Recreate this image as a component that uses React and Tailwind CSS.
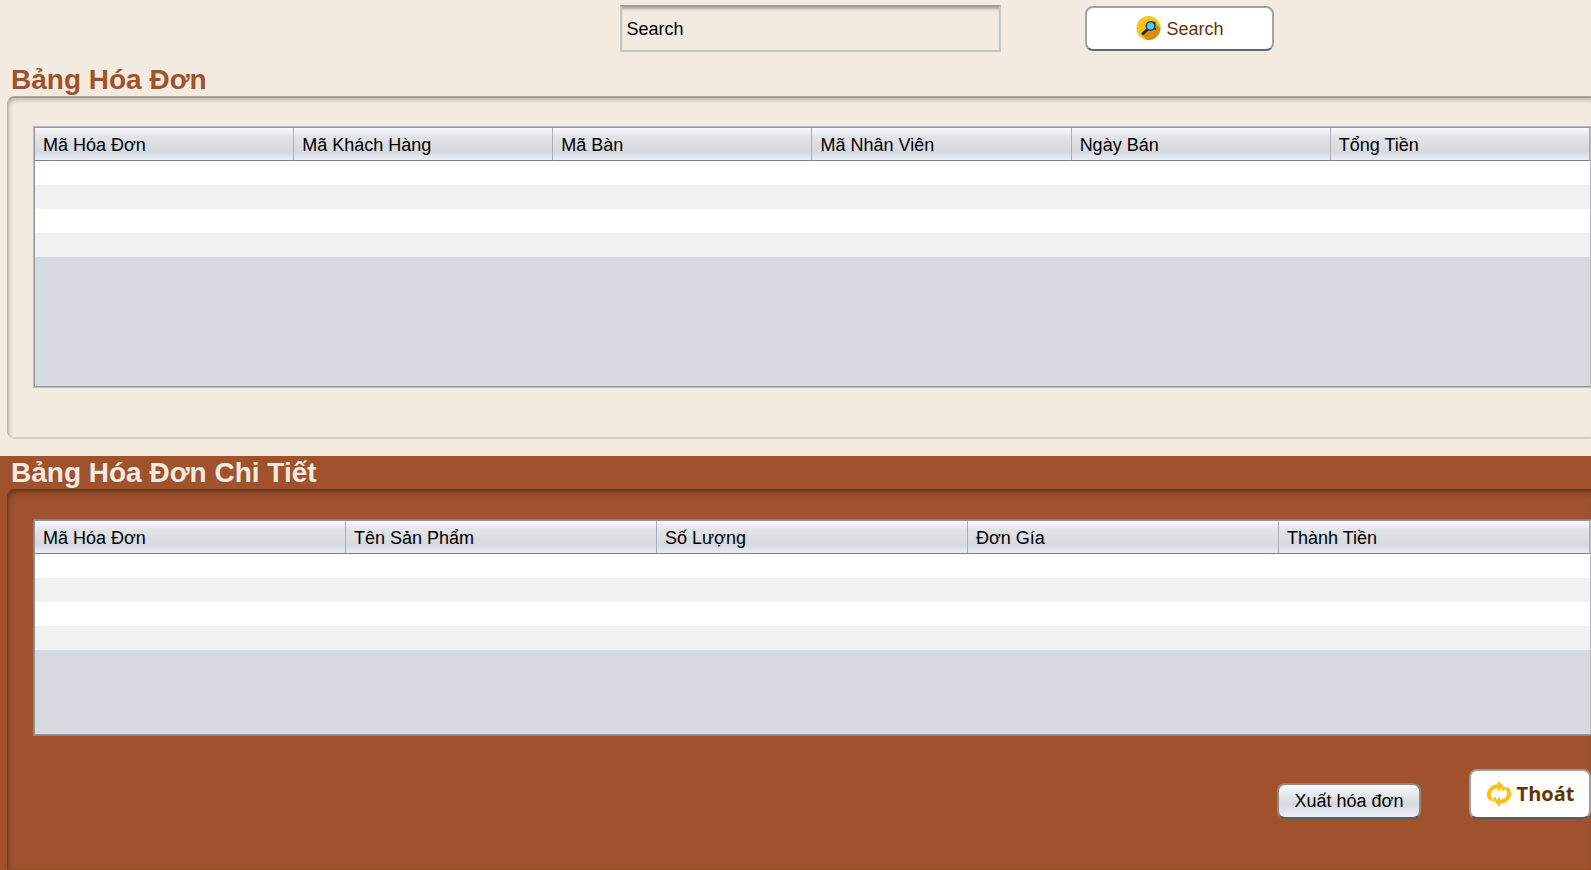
import React from "react";

const invoiceColumns = ["Mã Hóa Đơn", "Mã Khách Hàng", "Mã Bàn", "Mã Nhân Viên", "Ngày Bán", "Tổng Tiền"];
const detailColumns = ["Mã Hóa Đơn", "Tên Sản Phẩm", "Số Lượng", "Đơn Gía", "Thành Tiền"];

function SearchIcon() {
  return (
    <svg width="26" height="26" viewBox="0 0 26 26" aria-hidden="true">
      <defs>
        <clipPath id="disc">
          <circle cx="12.5" cy="12" r="12" />
        </clipPath>
      </defs>
      <g clipPath="url(#disc)">
        <rect width="26" height="26" fill="#fec21c" />
        <path d="M19 7 L26 13 V26 H12 L6 18.5 Z" fill="#d98e0b" />
      </g>
      <path d="M11.5 13.5 L7 17.5" stroke="#17203f" strokeWidth="3" strokeLinecap="round" />
      <circle cx="14.5" cy="10" r="4.3" fill="#4fcfea" stroke="#1f4a63" strokeWidth="1.6" />
      <path d="M17.5 6 L19.5 7.5 M18.5 12.5 L20 13.5" stroke="#1f3a4f" strokeWidth="1.8" />
    </svg>
  );
}

function RefreshIcon() {
  return (
    <svg width="26" height="26" viewBox="0 0 26 26" fill="none" aria-hidden="true">
      <g stroke="#ffbf0f" strokeWidth="4">
        <path d="M5.2 18.6 A10 8.2 0 0 1 12.5 5.2" />
        <path d="M20.8 7.4 A10 8.2 0 0 1 13.5 20.8" />
      </g>
      <path d="M12 0 L17.5 5.2 L12 10.5 Z M14 15.5 L8.5 20.8 L14 26 Z" fill="#ffbf0f" />
      <path d="M4.5 19.8 L9.8 15.5 L10.3 20 Z M21.5 6.2 L16.2 10.5 L15.7 6 Z" fill="#ffbf0f" />
    </svg>
  );
}

function DataTable({ label, columns, height }) {
  return (
    <div className={`border border-r-0 border-[#9b9ea5]/60 ${height}`}>
      <div className="h-full border border-[#8f94a1] border-r-[#b9bbbd] bg-[#d6d9e0]">
        <table aria-label={label} className="w-full table-fixed border-separate border-spacing-0">
          <thead>
            <tr>
              {columns.map((name) => (
                <th
                  key={name}
                  scope="col"
                  className="h-[33px] border-r border-b border-r-[#a9adb5] border-b-[#7b7f89] bg-[linear-gradient(to_bottom,#f8f9fb_0%,#e3e5e9_25%,#dcdee2_50%,#d6d9df_75%,#e9edf6_100%)] p-0 pt-[2px] pl-2 text-left text-lg leading-6 font-normal text-black"
                >
                  {name}
                </th>
              ))}
            </tr>
          </thead>
          <tbody>
            {[0, 1, 2, 3].map((row) => (
              <tr key={row} className="odd:bg-white even:bg-[#f1f1f1]">
                {columns.map((name) => (
                  <td key={name} className="h-6 p-0"></td>
                ))}
              </tr>
            ))}
          </tbody>
        </table>
      </div>
    </div>
  );
}

export default function App() {
  return (
    <div className="flex min-h-screen flex-col overflow-x-hidden bg-[#f3ebe0] font-['Liberation_Sans',Arial,sans-serif]">
      <form className="flex items-start pt-[5px] pl-[39%]" onSubmit={(e) => e.preventDefault()}>
        <input
          type="text"
          aria-label="Search"
          defaultValue="Search"
          className="h-[47px] w-[381px] border-2 border-[#c6c5c1] border-t-[#a19f98] bg-transparent px-1 pt-[2px] text-lg text-black shadow-[inset_0_3px_3px_-1px_rgba(80,75,60,0.4)] outline-none"
        />
        <button
          type="submit"
          className="mt-px ml-[84px] flex h-[45px] w-[189px] items-center justify-center gap-1 rounded-lg border-2 border-[#9da3a8] border-b-[#62676c] bg-white text-lg text-[#663300]"
        >
          <SearchIcon />
          Search
        </button>
      </form>

      <section className="pt-[11px] pl-[7px]">
        <h2 className="pl-1 text-[28px] leading-[33px] font-bold text-[#a0522d]">Bảng Hóa Đơn</h2>
        <div className="h-[343px] rounded-l-lg border-t-2 border-b-2 border-l border-t-[#a5a194] border-b-[#d5cfc2] border-l-[#b8b3a6] pt-7 pl-[25px] shadow-[inset_2px_3px_4px_-1px_rgba(80,75,50,0.35)]">
          <DataTable label="Bảng Hóa Đơn" columns={invoiceColumns} height="h-[262px]" />
        </div>
      </section>

      <section className="mt-[17px] flex grow flex-col bg-[#a0522d] pl-[7px]">
        <h2 className="pl-1 text-[28px] leading-[33px] font-bold text-[#f3ebe0]">Bảng Hóa Đơn Chi Tiết</h2>
        <div className="grow rounded-tl-lg border-t-2 border-b border-l border-t-[#6c371e] border-b-[#8f4928] border-l-[#7a3e22] pt-7 pl-[25px] shadow-[inset_2px_3px_4px_-1px_rgba(40,20,5,0.35)]">
          <DataTable label="Bảng Hóa Đơn Chi Tiết" columns={detailColumns} height="h-[217px]" />
          <div className="flex items-end justify-end gap-12 pt-[33px] pb-6">
            <button
              type="button"
              className="h-9 w-36 rounded-lg border-2 border-[#92867f] border-b-[#5c5c60] bg-linear-to-b from-[#f7f8fa] via-[#d6d9df] via-60% to-[#eceff7] text-lg leading-6 text-black"
            >
              Xuất hóa đơn
            </button>
            <button
              type="button"
              className="flex h-[50px] w-[122px] items-center justify-center gap-[5px] rounded-lg border-2 border-[#a49c97] border-b-[#5c5c60] bg-white font-['Open_Sans','Noto_Sans',sans-serif] text-xl font-bold text-[#663300]"
            >
              <RefreshIcon />
              Thoát
            </button>
          </div>
        </div>
      </section>
    </div>
  );
}
